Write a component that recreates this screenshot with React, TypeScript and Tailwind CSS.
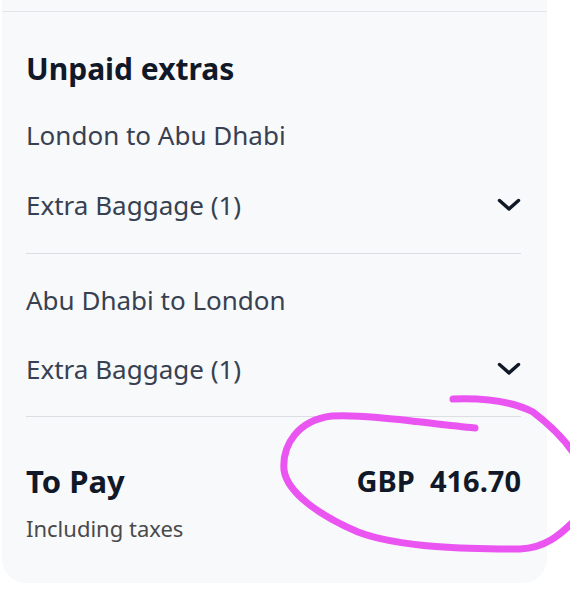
import React from "react";

const Chevron = () => (
  <svg width="24" height="14" viewBox="0 0 24 14" fill="none" className="shrink-0">
    <path d="M2.5 2.5 L12 11 L21.5 2.5" stroke="#111827" strokeWidth="3.4" strokeLinecap="round" strokeLinejoin="round" />
  </svg>
);

export default function App() {
  return (
    <div className="relative w-[570px] h-[610px] bg-white overflow-hidden" style={{ fontFamily: '"Noto Sans", sans-serif' }}>
      <div className="ml-[2px] w-[545px] bg-[#f8f9fb] rounded-b-[24px] pl-6 pr-[26px] pb-[41px]">
        <div className="h-[11px] -ml-6 -mr-[26px] border-b border-[#e3e5e9] box-content" />
        <h2 className="mt-[39px] text-[30px] leading-[36px] font-bold text-[#111827]">Unpaid extras</h2>

        <div className="mt-[32px] text-[26px] leading-[32px] text-[#374151]">London to Abu Dhabi</div>
        <div className="mt-[38px] flex items-center justify-between text-[26px] leading-[32px] text-[#374151]">
          <span>Extra Baggage (1)</span>
          <Chevron />
        </div>
        <div className="mt-[32px] border-t border-[#dcdee3]" />

        <div className="mt-[30px] text-[26px] leading-[32px] text-[#374151]">Abu Dhabi to London</div>
        <div className="mt-[37px] flex items-center justify-between text-[26px] leading-[32px] text-[#374151]">
          <span>Extra Baggage (1)</span>
          <Chevron />
        </div>
        <div className="mt-[31px] border-t border-[#dcdee3]" />

        <div className="mt-[46px] flex items-center justify-between">
          <span className="text-[31px] leading-[36px] font-bold text-[#111827]">To Pay</span>
          <span className="text-[29px] leading-[36px] font-bold text-[#111827] whitespace-pre">GBP  416.70</span>
        </div>
        <div className="mt-[15px] text-[22px] leading-[28px] text-[#4a4a4a]">Including taxes</div>
      </div>

      <svg className="absolute left-0 top-0 pointer-events-none" width="570" height="610" viewBox="0 0 570 610" fill="none">
        <path
          d="M475 428 C 430 424, 370 414, 332 416 C 298 420, 282 445, 284 470 C 287 492, 318 515, 358 532 C 400 548, 470 549, 520 549 C 545 548, 560 535, 575 520"
          stroke="#ea55f2" strokeWidth="7" strokeLinecap="round" strokeLinejoin="round"
        />
        <path
          d="M453 399 C 480 398, 510 400, 533 412 C 550 425, 565 440, 575 455"
          stroke="#ea55f2" strokeWidth="7" strokeLinecap="round" strokeLinejoin="round"
        />
      </svg>
    </div>
  );
}
